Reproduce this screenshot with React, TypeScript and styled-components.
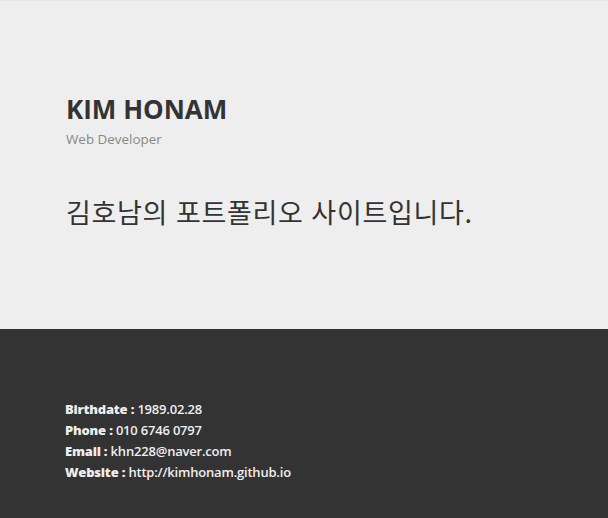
import React from "react";
import styled, { createGlobalStyle } from "styled-components";

const Global = createGlobalStyle`
  html, body { margin: 0; padding: 0; background: #333; }
  body { font-family: "Open Sans", "Noto Sans CJK KR", sans-serif; }
`;

const Page = styled.div`
  width: 608px;
  height: 518px;
  display: flex;
  flex-direction: column;
`;

const Intro = styled.section`
  height: 329px;
  box-sizing: border-box;
  background: #eeeeee;
  border-top: 1px solid #e6e6e6;
  padding: 90px 66px 0;
`;

const Name = styled.h1`
  margin: 0;
  font-family: "Open Sans", sans-serif;
  font-weight: 700;
  font-size: 26px;
  line-height: 36px;
  color: #333;
`;

const Role = styled.p`
  margin: 2px 0 0;
  font-family: "Open Sans", sans-serif;
  font-size: 13.4px;
  line-height: 20px;
  color: #888;
`;

const Greeting = styled.p`
  margin: 46px 0 0;
  font-family: "Noto Sans CJK KR", sans-serif;
  font-size: 27px;
  line-height: 34px;
  letter-spacing: 0.7px;
  word-spacing: 1px;
  color: #333;
`;

const Info = styled.section`
  flex: 1;
  background: #333333;
  padding: 70px 65px 0;
`;

const Line = styled.div`
  font-family: "Open Sans", sans-serif;
  font-size: 13px;
  line-height: 21px;
  font-weight: 600;
  letter-spacing: -0.2px;
  color: #eee;
`;

const Label = styled.b`
  font-weight: 800;
  letter-spacing: -0.2px;
`;

const rows: [string, string][] = [
  ["Birthdate", "1989.02.28"],
  ["Phone", "010 6746 0797"],
  ["Email", "khn228@naver.com"],
  ["Website", "http://kimhonam.github.io"],
];

export default function App() {
  return (
    <Page>
      <Global />
      <Intro>
        <Name>KIM HONAM</Name>
        <Role>Web Developer</Role>
        <Greeting>김호남의 포트폴리오 사이트입니다.</Greeting>
      </Intro>
      <Info>
        {rows.map(([k, v]) => (
          <Line key={k}>
            <Label>{k} :</Label> {v}
          </Line>
        ))}
      </Info>
    </Page>
  );
}
